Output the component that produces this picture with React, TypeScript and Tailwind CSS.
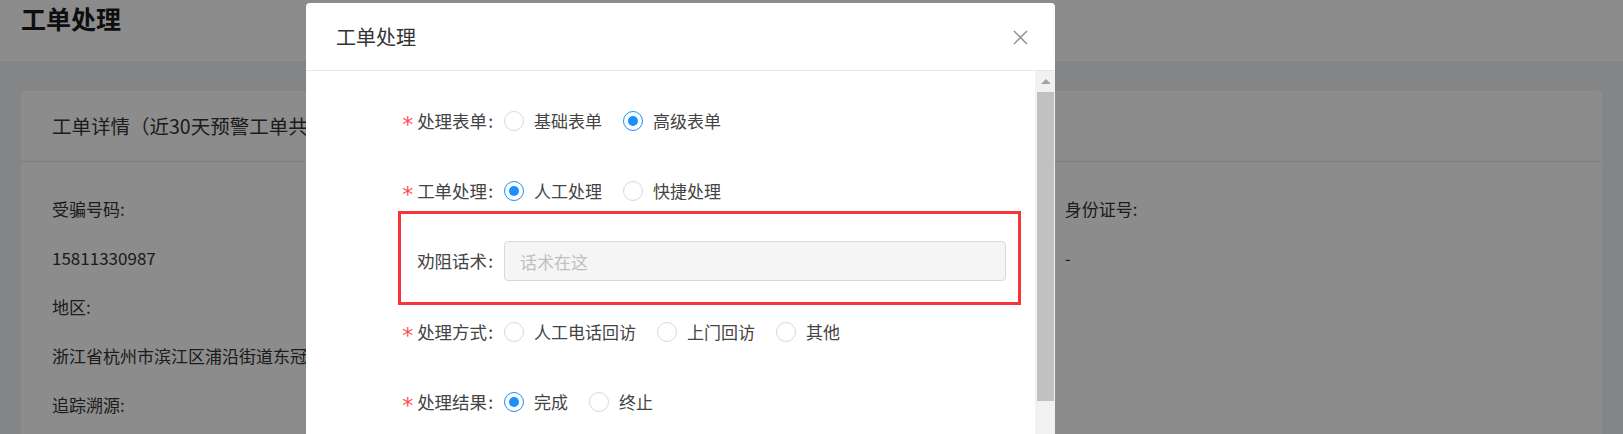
type Option = { label: string; checked?: boolean };

const Radio = ({ label, checked }: Option) => {
  return (
    <label className="flex items-center mr-[21px]">
      {checked ? (
        <span className="w-[20px] h-[20px] rounded-full border border-[#1890ff] flex items-center justify-center bg-white">
          <span className="w-[10px] h-[10px] rounded-full bg-[#1890ff]" />
        </span>
      ) : (
        <span className="w-[20px] h-[20px] rounded-full border border-[#d9d9d9] bg-white" />
      )}
      <span className="ml-[10px] text-[17px] text-[#444]">{label}</span>
    </label>
  );
};

const FormRow = ({
  label,
  options,
  className,
}: {
  label: string;
  options: Option[];
  className: string;
}) => {
  return (
    <div className={`flex items-center h-[40px] ${className}`}>
      <div className="w-[187px] flex items-center justify-end text-[17.5px] text-[#444]">
        <span
          className="text-[#ff4d4f] text-[22px] leading-[22px] mr-[4px] mt-[7px]"
          style={{ fontFamily: '"DejaVu Sans", sans-serif' }}
        >
          *
        </span>
        <span>{label}</span>
        <span className="ml-[1px]">:</span>
      </div>
      <div className="ml-[11px] flex items-center">
        {options.map((o) => (
          <Radio key={o.label} label={o.label} checked={o.checked} />
        ))}
      </div>
    </div>
  );
};

const App = () => {
  return (
    <div
      className="relative w-full h-[434px] overflow-hidden bg-[#f0f2f5]"
      style={{ fontFamily: '"Noto Sans CJK SC", "Noto Sans", sans-serif' }}
    >
      {/* Page header */}
      <div className="h-[61px] bg-white px-[21px] pt-[1px]">
        <h1 className="text-[25px] leading-[34px] font-bold text-[#1a1a1a]">工单处理</h1>
      </div>

      {/* Detail card */}
      <div className="mx-[21px] mt-[30px] bg-white rounded-[4px] h-[400px]">
        <div className="h-[71px] border-b border-[#e8e8e8] px-[31px] flex items-center">
          <p className="text-[19.5px] text-[#333]">工单详情（近30天预警工单共3条）</p>
        </div>
        <div className="px-[31px] pt-[22px] grid grid-cols-3 text-[17px] text-[#333]">
          <div>
            <div className="h-[49px] flex items-center">受骗号码:</div>
            <div className="h-[49px] flex items-center">15811330987</div>
            <div className="h-[49px] flex items-center">地区:</div>
            <div className="h-[49px] flex items-center whitespace-nowrap">浙江省杭州市滨江区浦沿街道东冠社区</div>
            <div className="h-[49px] flex items-center">追踪溯源:</div>
          </div>
          <div />
          <div>
            <div className="h-[49px] flex items-center">身份证号:</div>
            <div className="h-[49px] flex items-center">-</div>
          </div>
        </div>
      </div>

      {/* Mask */}
      <div className="absolute inset-0 bg-black/45" />

      {/* Modal */}
      <div className="absolute left-[306px] top-[3px] w-[749px] h-[460px] bg-white rounded-t-[4px] flex flex-col">
        <div className="h-[68px] shrink-0 border-b border-[#e8e8e8] pl-[30px] pr-[27px] flex items-center justify-between">
          <span className="text-[20px] text-[#333]">工单处理</span>
          <svg width="15" height="15" viewBox="0 0 15 15" className="mt-[1px]">
            <path d="M1 1 L14 14 M14 1 L1 14" stroke="#8c8c8c" strokeWidth="1.4" fill="none" />
          </svg>
        </div>

        <div className="flex flex-1">
          {/* Form */}
          <div className="flex-1 pt-[30px]">
            <FormRow
              className=""
              label="处理表单"
              options={[{ label: "基础表单" }, { label: "高级表单", checked: true }]}
            />
            <FormRow
              className="mt-[30px]"
              label="工单处理"
              options={[{ label: "人工处理", checked: true }, { label: "快捷处理" }]}
            />

            <div className="ml-[92px] w-[623px] h-[94px] border-[3px] border-[#f5353a] flex items-start pt-[27px]">
              <div className="w-[92px] flex justify-end text-[17.5px] text-[#444] leading-[40px]">
                <span>劝阻话术</span>
                <span className="ml-[1px]">:</span>
              </div>
              <input
                readOnly
                placeholder="话术在这"
                className="ml-[11px] w-[502px] h-[40px] bg-[#f5f5f5] border border-[#d9d9d9] rounded-[4px] pl-[15px] text-[17px] placeholder:text-[#bfbfbf] outline-none"
              />
            </div>

            <FormRow
              className="mt-[7px]"
              label="处理方式"
              options={[{ label: "人工电话回访" }, { label: "上门回访" }, { label: "其他" }]}
            />
            <FormRow
              className="mt-[30px]"
              label="处理结果"
              options={[{ label: "完成", checked: true }, { label: "终止" }]}
            />
          </div>

          {/* Scrollbar */}
          <div className="w-[20px] bg-[#f1f1f1] pl-[2px] pr-[1px] flex flex-col">
            <div className="h-[21px] flex items-center justify-center">
              <span className="w-0 h-0 border-l-[5px] border-r-[5px] border-b-[5px] border-l-transparent border-r-transparent border-b-[#a3a3a3]" />
            </div>
            <div className="h-[309px] bg-[#c1c1c1]" />
          </div>
        </div>
      </div>
    </div>
  );
};

export default App;
